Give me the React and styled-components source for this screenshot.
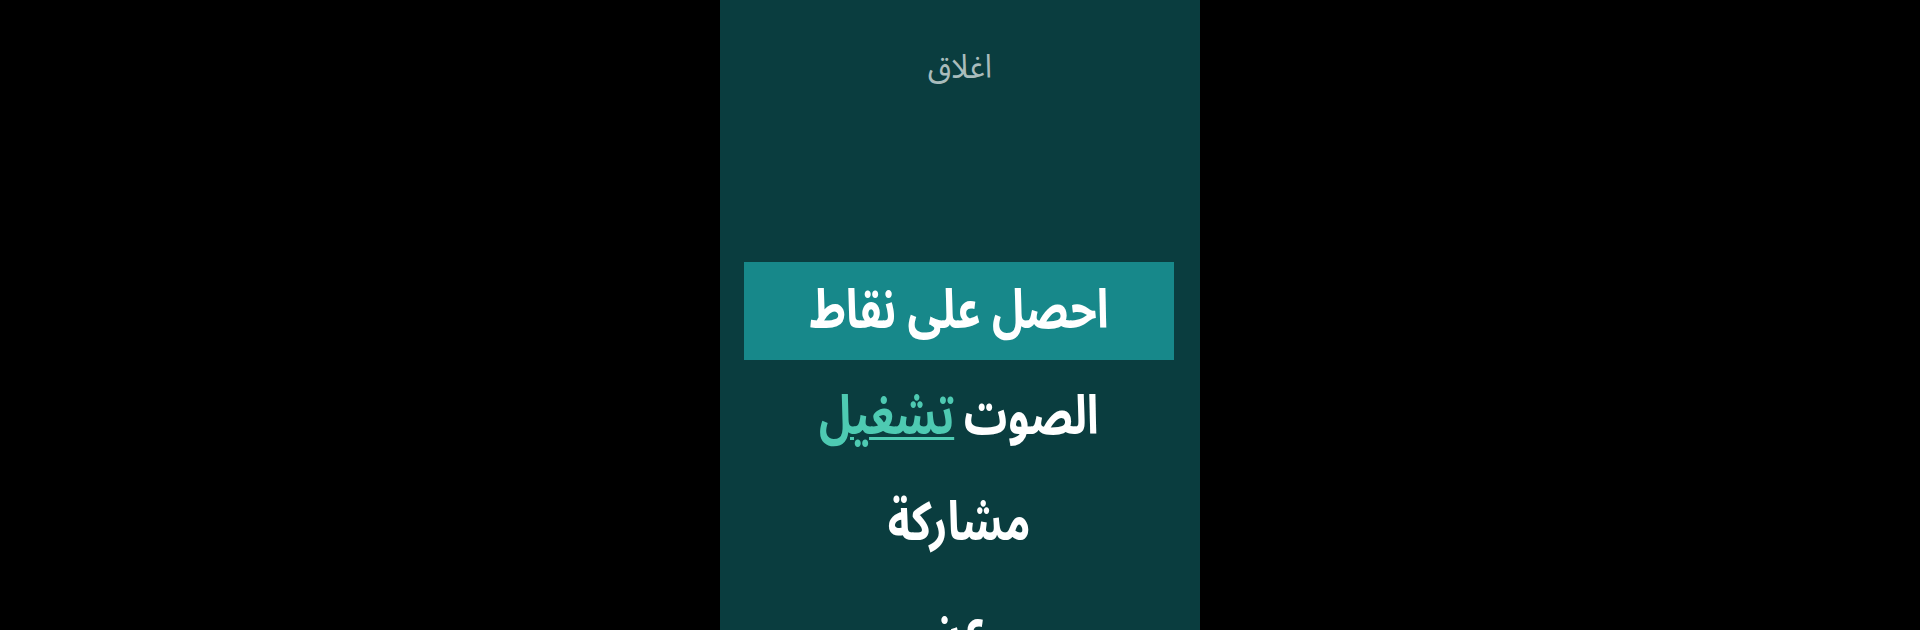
import React from "react";
import styled, { createGlobalStyle } from "styled-components";

const GlobalStyle = createGlobalStyle`
  html, body {
    margin: 0;
    padding: 0;
    background: #000;
    height: 630px;
    overflow: hidden;
  }
  #root {
    height: 630px;
  }
`;

const items = [
  { id: "points", label: "احصل على نقاط", active: true },
  { id: "sound", label: "الصوت", toggle: "تشغيل" },
  { id: "share", label: "مشاركة" },
  { id: "about", label: "عن" },
];

function App() {
  return (
    <>
      <GlobalStyle />
      <Page>
        <Panel dir="rtl">
          <Close>اغلاق</Close>
          <Menu>
            {items.map((item) => (
              <Item key={item.id} active={item.active}>
                <Label>
                  {item.label}
                  {item.toggle && <Toggle>{item.toggle}</Toggle>}
                </Label>
              </Item>
            ))}
          </Menu>
        </Panel>
      </Page>
    </>
  );
}

const Page = styled.div`
  display: flex;
  justify-content: center;
  height: 630px;
  background: #000;
`;

const Panel = styled.div`
  width: 480px;
  height: 630px;
  background-color: #0a3d3f;
  display: flex;
  flex-direction: column;
  align-items: stretch;
  overflow: hidden;
  font-family: "Noto Sans Arabic", "DejaVu Sans", sans-serif;
`;

const Close = styled.div`
  align-self: center;
  margin-top: 43px;
  font-size: 33px;
  line-height: 50px;
  color: #a9bcbc;
  transform: scaleX(0.92);
`;

const Menu = styled.div`
  display: flex;
  flex-direction: column;
  gap: 8px;
  padding: 0 26px 0 24px;
  margin-top: 169px;
`;

const Item = styled.div`
  height: 98px;
  display: flex;
  align-items: center;
  justify-content: center;
  background-color: ${(props) => (props.active ? "#17888a" : "transparent")};
`;

const Label = styled.span`
  display: inline-flex;
  align-items: baseline;
  gap: 12px;
  font-size: 54px;
  font-weight: bold;
  color: #ffffff;
  transform: scaleX(0.8);
  white-space: nowrap;
`;

const Toggle = styled.span`
  color: #4ecab2;
  text-decoration: underline;
  text-decoration-thickness: 3px;
  text-underline-offset: 3px;
`;

export default App;
